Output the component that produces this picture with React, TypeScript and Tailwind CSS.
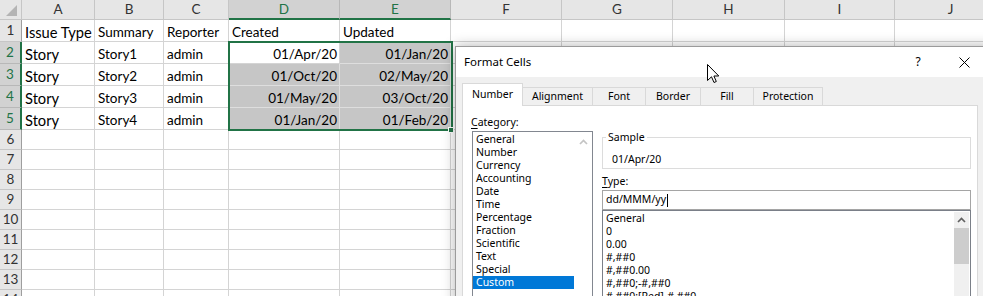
import { Fragment } from "react";
import clsx from "clsx";

const letters = ["A", "B", "C", "D", "E", "F", "G", "H", "I", "J"];

const data: Record<number, string[]> = {
  1: ["Issue Type", "Summary", "Reporter", "Created", "Updated"],
  2: ["Story", "Story1", "admin", "01/Apr/20", "01/Jan/20"],
  3: ["Story", "Story2", "admin", "01/Oct/20", "02/May/20"],
  4: ["Story", "Story3", "admin", "01/May/20", "03/Oct/20"],
  5: ["Story", "Story4", "admin", "01/Jan/20", "01/Feb/20"],
};

const categories = [
  "General",
  "Number",
  "Currency",
  "Accounting",
  "Date",
  "Time",
  "Percentage",
  "Fraction",
  "Scientific",
  "Text",
  "Special",
  "Custom",
];

const types = [
  "General",
  "0",
  "0.00",
  "#,##0",
  "#,##0.00",
  "#,##0;-#,##0",
  "#,##0;[Red]-#,##0",
];

const tabs = [
  { label: "Number", w: "w-[61px]" },
  { label: "Alignment", w: "w-[71px]" },
  { label: "Font", w: "w-[54px]" },
  { label: "Border", w: "w-[56px]" },
  { label: "Fill", w: "w-[54px]" },
  { label: "Protection", w: "w-[70px]" },
];

function Sheet() {
  const rows = Array.from({ length: 14 }, (_, i) => i + 1);
  return (
    <div className="grid grid-cols-[22px_73px_69px_65px_111px_111px_111px_111px_112px_110px_112px] grid-rows-[20px_22px_22px_22px_22px_22px_20px_20px_20px_20px_20px_20px_20px_20px_20px] font-['Lato',sans-serif] text-[13.5px] text-black">
      <div className="flex items-end justify-end border-r border-b border-[#c6c6c6] bg-[#e6e6e6] pr-[3px] pb-[2px]">
        <svg width="12" height="12" viewBox="0 0 12 12">
          <polygon points="11,0 11,11 0,11" fill="#b4b4b4" />
        </svg>
      </div>
      {letters.map((l, c) => (
        <div
          key={l}
          className={clsx(
            "flex items-center justify-center border-r border-b",
            c === 3 || c === 4
              ? "bg-[#d2d2d2] text-[#217346] border-r-[#b8b8b8] border-b-2 border-b-[#217346]"
              : "bg-[#e6e6e6] text-[#333] border-[#c6c6c6]"
          )}
        >
          {l}
        </div>
      ))}
      {rows.map((r) => {
        const selRow = r >= 2 && r <= 5;
        return (
          <Fragment key={r}>
            <div
              className={clsx(
                "flex items-center justify-center border-b",
                selRow
                  ? "bg-[#d2d2d2] text-[#217346] border-b-[#b8b8b8] border-r-2 border-r-[#217346]"
                  : "bg-[#e6e6e6] text-[#333] border-b-[#c6c6c6] border-r border-r-[#9e9e9e]"
              )}
            >
              {r}
            </div>
            {letters.map((l, c) => {
              const sel = selRow && (c === 3 || c === 4);
              const active = r === 2 && c === 3;
              const text = data[r]?.[c] ?? "";
              return (
                <div
                  key={l}
                  className={clsx(
                    "flex items-end whitespace-nowrap overflow-hidden border-r border-b pb-[1px] leading-[16px]",
                    sel && !active ? "bg-[#c6c6c6] border-[#dedede]" : "bg-white border-[#d4d4d4]",
                    c >= 3 && r >= 2 ? "justify-end pr-[2px]" : "pl-[3px]",
                    c === 0 ? "text-[14.7px]" : "text-[13.5px]"
                  )}
                >
                  {text}
                </div>
              );
            })}
          </Fragment>
        );
      })}
    </div>
  );
}

function Chevron({ color }: { color: string }) {
  return (
    <svg width="9" height="6" viewBox="0 0 9 6">
      <polyline points="1,5 4.5,1.5 8,5" fill="none" stroke={color} strokeWidth="1.7" />
    </svg>
  );
}

function FormatCells() {
  return (
    <div className="absolute left-[455px] top-[46px] w-[540px] h-[262px] border border-[#9b9b9b] bg-[#f0f0f0] shadow-[0_0_12px_rgba(0,0,0,0.3)] font-['Noto_Sans',sans-serif] text-[10.5px] text-black">
      {/* title bar */}
      <div className="flex h-[30px] items-center bg-white pr-[7px]">
        <span className="flex-1 pl-[8px] text-[11.5px]">Format Cells</span>
        <span className="w-[30px] text-center text-[12px]">?</span>
        <span className="ml-[8px] flex w-[46px] justify-center">
          <svg width="11" height="11" viewBox="0 0 11 11">
            <path d="M0.5 0.5 L10.5 10.5 M10.5 0.5 L0.5 10.5" stroke="#000" strokeWidth="1" />
          </svg>
        </span>
      </div>

      {/* tabs */}
      <div className="relative z-10 flex h-[28px] items-end pl-[6px]">
        {tabs.map((t, i) =>
          i === 0 ? (
            <div
              key={t.label}
              className={clsx(
                t.w,
                "-mb-px flex h-[23px] items-center justify-center border border-b-0 border-[#d9d9d9] bg-white"
              )}
            >
              {t.label}
            </div>
          ) : (
            <div
              key={t.label}
              className={clsx(
                t.w,
                "-ml-px flex h-[18px] items-center justify-center border border-b-0 border-[#d9d9d9] bg-[#f0f0f0] pt-[1px]"
              )}
            >
              {t.label}
            </div>
          )
        )}
      </div>

      {/* tab page */}
      <div className="ml-[6px] flex h-[220px] w-[516px] border border-[#d9d9d9] bg-white">
        <div className="flex flex-col pl-[9px] pt-[8px]">
          <div className="-ml-px h-[16px] leading-[16px]">
            <span className="underline underline-offset-2">C</span>ategory:
          </div>
          <div className="mt-[1px] flex h-[200px] w-[121px] border border-[#828790] bg-white">
            <div className="w-[101px] pt-[1px]">
              {categories.map((c) => (
                <div
                  key={c}
                  className={clsx(
                    "h-[13px] pl-[3px] leading-[13px]",
                    c === "Custom" && "bg-[#0078d7] text-white"
                  )}
                >
                  {c}
                </div>
              ))}
            </div>
            <div className="flex flex-1 justify-center pt-[7px]">
              <div className="h-[6px]">
                <Chevron color="#c4c4c4" />
              </div>
            </div>
          </div>
        </div>

        <div className="ml-[9px] flex w-[369px] flex-col pt-[31px]">
          <div className="relative h-[32px] border border-[#dcdcdc] pl-[9px] pt-[13px] leading-[16px]">
            <span className="absolute -top-[9px] left-[3px] bg-white px-[2px] leading-[16px]">Sample</span>
            01/Apr/20
          </div>
          <div className="mt-[4px] h-[16px] leading-[16px]">
            <span className="underline underline-offset-2">T</span>ype:
          </div>
          <div className="mt-[1px] flex h-[20px] items-center border border-[#a5a5a5] pl-[3px]">
            dd/MMM/yy
            <span className="ml-px h-[13px] w-px bg-black" />
          </div>
          <div className="flex h-[100px] border border-[#7a7f88]">
            <div className="flex-1 pt-[1px]">
              {types.map((t) => (
                <div key={t} className="h-[13px] pl-[3px] leading-[13px]">
                  {t}
                </div>
              ))}
            </div>
            <div className="mr-px mt-px flex w-[15px] flex-col items-center bg-[#f0f0f0]">
              <div className="flex h-[16px] items-center">
                <Chevron color="#606060" />
              </div>
              <div className="w-full h-[36px] bg-[#cdcdcd]" />
            </div>
          </div>
        </div>
      </div>
    </div>
  );
}

export default function App() {
  return (
    <div className="relative h-[296px] w-[983px] overflow-hidden bg-white">
      <Sheet />
      {/* selection outline and fill handle */}
      <div className="absolute left-[228px] top-[41px] h-[90px] w-[225px] border-2 border-[#217346]" />
      <div className="absolute left-[448px] top-[127px] h-[6px] w-[6px] border border-white bg-[#217346]" />
      <FormatCells />
      {/* mouse pointer */}
      <svg className="absolute left-[707px] top-[64px]" width="13" height="20" viewBox="0 0 13 20">
        <path
          d="M0.5 0.5 L0.5 16.5 L4.5 12.8 L7 18.5 L9.3 17.5 L6.9 12 L11.8 12 Z"
          fill="#fff"
          stroke="#000"
          strokeWidth="1"
          strokeLinejoin="miter"
        />
      </svg>
    </div>
  );
}
